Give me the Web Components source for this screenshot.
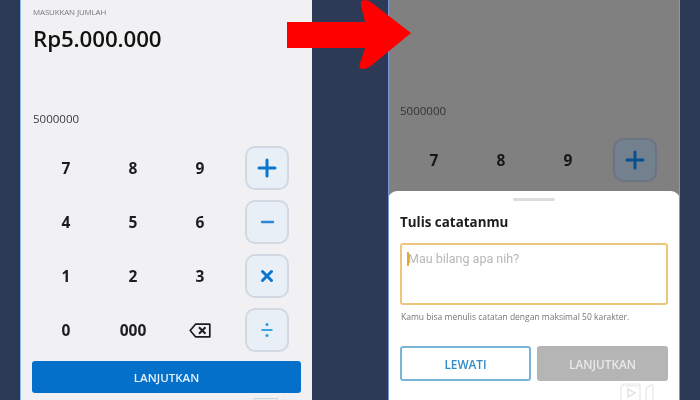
<!DOCTYPE html>
<html><head><meta charset="utf-8">
<style>
html,body{margin:0;height:400px;overflow:hidden}
body{background:#2c3a55;font-family:"Open Sans","Noto Sans",sans-serif;width:700px}
</style></head><body>
<template id="t-stage"><style>
:host{display:flex;position:relative;width:700px;height:400px;padding-left:20px;gap:76px;box-sizing:border-box;overflow:hidden}
svg{position:absolute;left:287px;top:0}
</style><slot></slot>
<svg width="126" height="70" viewBox="0 0 126 70"><path d="M0 22H78L74 6Q73 0 78 0Q82 0 85 3L124 33L85 65Q80 69 76 69Q71 69 73 63L78 48H0Z" fill="#ff0000"/></svg>
</template>
<template id="t-phone"><style>
:host{display:block;position:relative;width:292px;height:400px;box-sizing:border-box;overflow:hidden;background:var(--bg,#f1f1f3);border-left:1px solid var(--edge,#8db6ee);border-right:1px solid var(--edge-r,#f1f1f3);color:var(--ink,#1d1d1f);filter:blur(.3px)}
</style><slot></slot></template>
<template id="t-amount"><style>
:host{display:flex;flex-direction:column;height:141px;padding-left:12px;box-sizing:border-box}
.l{height:24px;font-size:7.9px;line-height:24px;color:#77777d;text-transform:uppercase;letter-spacing:-.1px}
.a{height:30px;font-size:22.3px;line-height:30px;font-weight:600;color:#111;letter-spacing:-.1px}
.v{margin-top:auto;height:30px;font-size:11.5px;line-height:16px;color:#3a3a3c}
</style><div class="l"><slot name="label"></slot></div><div class="a"><slot name="amount"></slot></div><div class="v"><slot name="value"></slot></div></template>
<template id="t-pad"><style>
:host{display:grid;grid-template-columns:repeat(4,67px);grid-auto-rows:54px;margin-left:11px}
</style><slot></slot></template>
<template id="t-key"><style>
:host{display:flex;align-items:center;justify-content:center;padding-left:1px;box-sizing:border-box;font-size:15.5px;font-weight:700;color:inherit}
</style><slot></slot></template>
<template id="t-op"><style>
:host{display:flex;align-items:center;justify-content:center;font-size:0}
.b{width:44px;height:44px;box-sizing:border-box;display:flex;align-items:center;justify-content:center;border-radius:10px;border:2px solid var(--op-line,#d2d8e2);background:var(--op-bg,#e8eff7);color:var(--op-ink,#0b76cd);margin-left:1px}
</style><div class="b"><slot></slot></div></template>
<template id="t-primary"><style>
:host{display:flex;align-items:center;justify-content:center;height:32px;margin:4px 10px 0 11px;border-radius:3px;background:#0470ca;color:#e6f1fb;font-size:11.5px;font-weight:600}
</style><slot></slot></template>
<template id="t-sheet"><style>
:host{position:absolute;left:-1px;right:-1px;top:191px;bottom:0;background:#fff;border-radius:9px 9px 0 0;padding:7px 12px 0 12px;display:flex;flex-direction:column;color:#1c1c1e}
.h{align-self:center;width:42px;height:3px;border-radius:2px;background:#dcdcdc}
.t{font-size:13.4px;font-weight:700;line-height:20px;margin-top:11px}
.f{margin-top:11px;height:62px;box-sizing:border-box;border:2px solid #ecc67c;border-radius:3px;padding:5px 0 0 5px;display:flex;align-items:flex-start;font:12.5px/18px Roboto,sans-serif;color:#b7b7b7}
.c{width:2px;height:14px;background:#e0a93a;margin:2px -1px 0 0;flex:none}
.n{font-size:8.5px;line-height:12px;color:#77777a;margin-top:6px;padding-left:1px}
.r{display:flex;gap:6px;margin-top:23px}
</style><div class="h"></div><div class="t"><slot name="title"></slot></div><div class="f"><span class="c"></span><slot name="ph"></slot></div><div class="n"><slot name="note"></slot></div><div class="r"><slot></slot></div></template>
<template id="t-btn"><style>
:host{flex:none;width:131px;height:35px;box-sizing:border-box;display:flex;align-items:center;justify-content:center;border-radius:3px;font-size:11.8px;font-weight:600;border:2px solid #79b5d6;color:#2f8cc6;background:#fff}
:host([off]){background:#b5b5b5;border-color:#b5b5b5;color:#e9e9e9}
</style><slot></slot></template>
<template id="t-mark"><style>
:host{position:absolute;display:block;left:var(--x);top:var(--y)}
svg{display:block}
</style><slot></slot></template>

<script>
const reg=(n,t)=>customElements.define(n,class extends HTMLElement{constructor(){super();this.attachShadow({mode:"open"}).appendChild(document.getElementById(t).content.cloneNode(true));}});
[["app-stage","t-stage"],["phone-frame","t-phone"],["amount-panel","t-amount"],["key-pad","t-pad"],["num-key","t-key"],["op-key","t-op"],["primary-bar","t-primary"],["note-sheet","t-sheet"],["sheet-btn","t-btn"],["corner-mark","t-mark"]].forEach(a=>reg(a[0],a[1]));
</script>

<app-stage>
<phone-frame>
 <amount-panel><span slot="label">Masukkan Jumlah</span><span slot="amount">Rp5.000.000</span><span slot="value">5000000</span></amount-panel>
 <key-pad>
  <num-key>7</num-key><num-key>8</num-key><num-key>9</num-key>
  <op-key><svg width="20" height="20" viewBox="0 0 20 20"><path d="M10 2V18M2 10H18" stroke="currentColor" stroke-width="3" stroke-linecap="round"/></svg></op-key>
  <num-key>4</num-key><num-key>5</num-key><num-key>6</num-key>
  <op-key><svg width="20" height="20" viewBox="0 0 20 20"><path d="M5 10H16" stroke="#2a86d6" stroke-width="2.4" stroke-linecap="round"/></svg></op-key>
  <num-key>1</num-key><num-key>2</num-key><num-key>3</num-key>
  <op-key><svg width="20" height="20" viewBox="0 0 20 20"><path d="M5.5 5.5L14.5 14.5M14.5 5.5L5.5 14.5" stroke="currentColor" stroke-width="3" stroke-linecap="round"/></svg></op-key>
  <num-key>0</num-key><num-key>000</num-key>
  <num-key><svg width="22" height="15" viewBox="0 0 22 15"><path d="M6.5 1.2H20.8V13.8H6.5L1.2 7.5Z" fill="none" stroke="#1d1d1f" stroke-width="1.7" stroke-linejoin="round"/><path d="M10 4.3L16.5 10.7M16.5 4.3L10 10.7" stroke="#1d1d1f" stroke-width="2"/></svg></num-key>
  <op-key><svg width="20" height="20" viewBox="0 0 20 20"><path d="M4.5 10H15.5" stroke="#2a9ae0" stroke-width="1.8"/><circle cx="10" cy="4.5" r="1.5" fill="#2a9ae0"/><circle cx="10" cy="15.5" r="1.5" fill="#2a9ae0"/></svg></op-key>
 </key-pad>
 <primary-bar>LANJUTKAN</primary-bar>
 <corner-mark style="--x:232px;--y:390px"><svg width="36" height="10" viewBox="0 0 36 10"><path d="M1 10V1.5H24V10" fill="#e9eef3" stroke="#cfd6dc" stroke-width="1.2"/><circle cx="30" cy="3" r="1.6" fill="#dfe8f0"/></svg></corner-mark>
</phone-frame>
<phone-frame style="--bg:#808080;--edge:#7b9ad3;--edge-r:#7b9ad3;--ink:#17171a">
 <amount-panel style="height:133px;padding-left:11px"><span slot="value" style="color:#333">5000000</span></amount-panel>
 <key-pad style="--op-bg:#73808e;--op-line:#6c7481;--op-ink:#07508f">
  <num-key>7</num-key><num-key>8</num-key><num-key>9</num-key>
  <op-key><svg width="20" height="20" viewBox="0 0 20 20"><path d="M10 2V18M2 10H18" stroke="currentColor" stroke-width="3" stroke-linecap="round"/></svg></op-key>
 </key-pad>
 <note-sheet>
  <span slot="title">Tulis catatanmu</span>
  <span slot="ph">Mau bilang apa nih?</span>
  <span slot="note">Kamu bisa menulis catatan dengan maksimal 50 karakter.</span>
  <sheet-btn>LEWATI</sheet-btn><sheet-btn off>LANJUTKAN</sheet-btn>
 </note-sheet>
 <corner-mark style="--x:231px;--y:383px"><svg width="36" height="17" viewBox="0 0 36 17"><path d="M1 17V3H3V1H20V17M5 3H20" fill="none" stroke="#e6e6e6" stroke-width="1.2"/><path d="M8 6L15 10L8 14Z" fill="none" stroke="#dcdcdc" stroke-width="1.2"/><path d="M26 17V5L31 2H33V17" fill="none" stroke="#e6e6e6" stroke-width="1.2"/></svg></corner-mark>
</phone-frame>
</app-stage>
</body></html>
